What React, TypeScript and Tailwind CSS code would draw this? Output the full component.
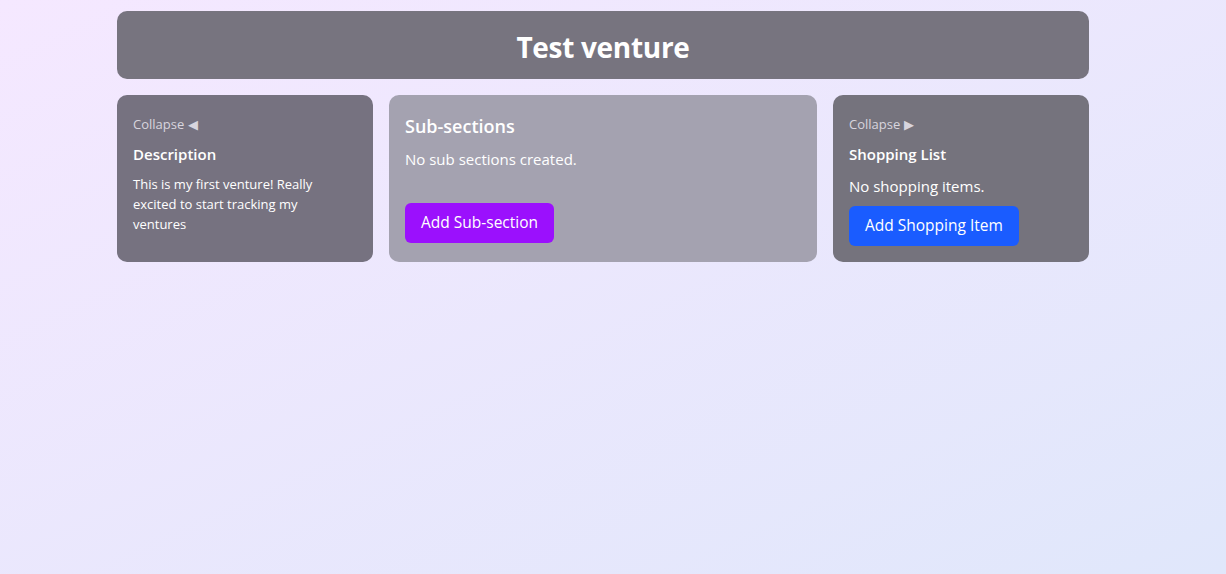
const App = () => {
  return (
    <div className="min-h-[574px] w-full bg-linear-to-br from-[#f5e8ff] to-[#e0e7fb] pt-[11px] font-['Open_Sans',sans-serif]">
      <div className="ml-[117px] flex w-[972px] flex-col gap-4">

        {/* Title */}
        <div className="flex h-[68px] items-center justify-center rounded-[10px] bg-[#77747f] pt-[3px]">
          <h1 className="text-[28px] font-bold tracking-[-0.3px] text-white">Test venture</h1>
        </div>

        <div className="flex h-[167px] gap-4">
          {/* Description */}
          <div className="flex w-[256px] flex-col rounded-[10px] bg-[#767280] pl-4 pr-8 pt-[19px]">
            <p className="text-[13px] leading-5 text-[#d8d5de]">Collapse ◀</p>
            <h3 className="mt-[10px] text-[15px] font-semibold leading-5 text-white">Description</h3>
            <p className="mt-[10px] text-[13px] leading-5 text-white">
              This is my first venture! Really excited to start tracking my ventures
            </p>
          </div>

          {/* Sub-sections */}
          <div className="flex flex-1 flex-col items-start rounded-[10px] bg-[#a4a2b0] px-4 pt-[19px]">
            <h2 className="text-[18px] font-semibold leading-6 text-white">Sub-sections</h2>
            <p className="mt-[11px] text-[15px] leading-5 text-white">No sub sections created.</p>
            <button className="mt-[34px] h-[40px] rounded-[6px] bg-[#9b10fd] px-4 text-[15.5px] text-white">
              Add Sub-section
            </button>
          </div>

          {/* Shopping list */}
          <div className="flex w-[256px] flex-col items-start rounded-[10px] bg-[#75737d] px-4 pt-[19px]">
            <p className="text-[13px] leading-5 text-[#d8d5de]">Collapse ▶</p>
            <h3 className="mt-[10px] text-[15px] font-semibold leading-5 text-white">Shopping List</h3>
            <p className="mt-[12px] text-[15px] leading-5 text-white">No shopping items.</p>
            <button className="mt-[10px] h-[40px] rounded-[6px] bg-[#1a5cff] px-4 text-[15.5px] text-white">
              Add Shopping Item
            </button>
          </div>
        </div>
      </div>
    </div>
  )
}

export default App
